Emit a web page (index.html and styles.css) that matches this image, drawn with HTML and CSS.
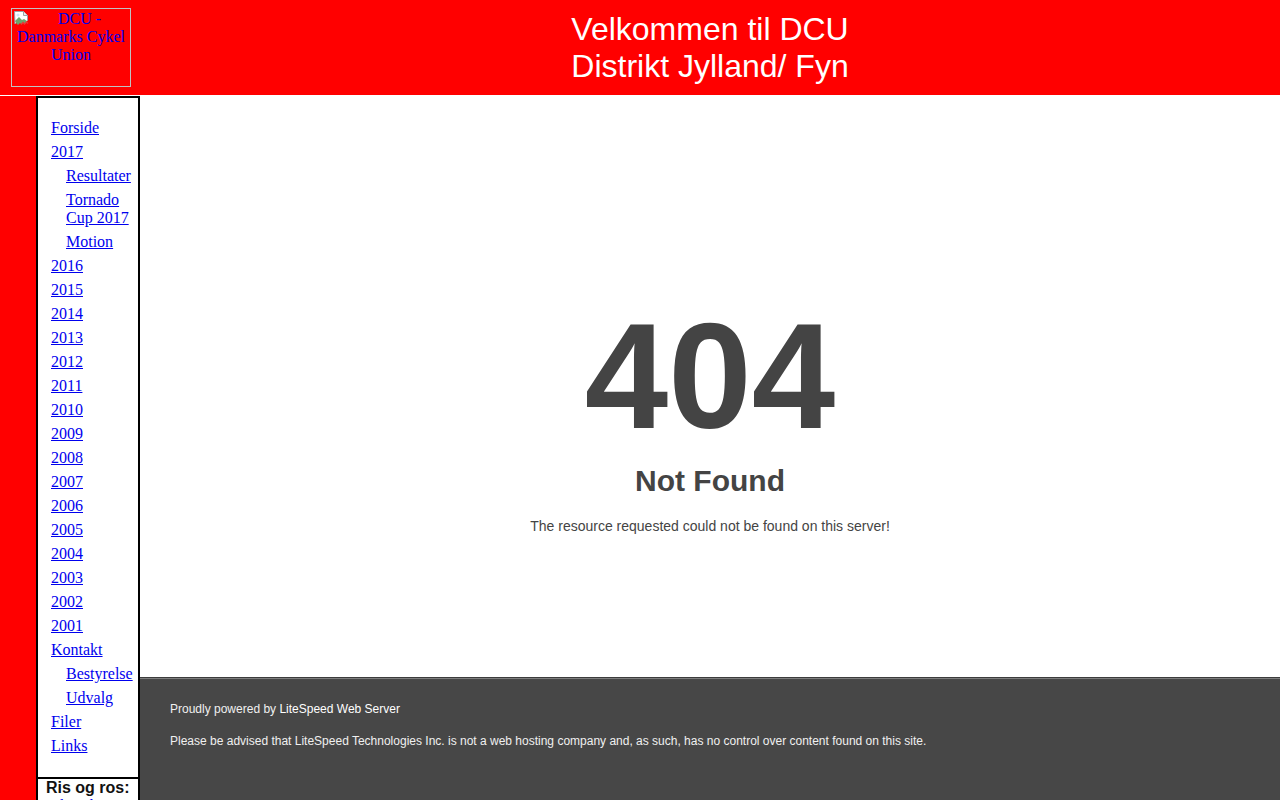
FILE: index.html
```html
<!DOCTYPE html>
<html lang="da">
<head>
<meta charset="utf-8">
<title>DCU Distrikt Jylland/ Fyn</title>
<link rel="stylesheet" href="styles.css">
</head>
<body>
<header class="topbar">
  <div class="logo-cell">
    <a class="logo" href="#">
      <svg class="broken" width="16" height="16" viewBox="0 0 16 16">
        <path d="M1.5 1.5h9l4 4v5l-2 2-1.5-1.5-2 2-1.5-1.5-2 2-1.5-1.5-2 2z" fill="#fff" stroke="#9aa0a6"/>
        <path d="M10.5 1.5v4h4" fill="#e8eaed" stroke="#9aa0a6"/>
        <circle cx="5" cy="5" r="1.6" fill="#d2e3fc"/>
        <path d="M2 11l4-4 3 3 2-1 3 2v1l-2 2-1.5-1.5-2 2-1.5-1.5-2 2-1.5-1.5z" fill="#6ba46b"/>
        <path d="M8 14.5l2-2 1.5 1.5 2-2 1.5 1.5" fill="none" stroke="#e33" stroke-width="1.3"/>
      </svg>DCU - Danmarks Cykel Union</a>
  </div>
  <h1 class="title">Velkommen til DCU<br>Distrikt Jylland/ Fyn</h1>
</header>
<div class="body-row">
  <div class="red-strip"></div>
  <nav class="menu">
    <div class="menu-links">
      <a class="item" href="#">Forside</a>
      <a class="item" href="#">2017</a>
      <a class="item sub" href="#">Resultater</a>
      <a class="item sub" href="#">Tornado Cup 2017</a>
      <a class="item sub" href="#">Motion</a>
      <a class="item" href="#">2016</a>
      <a class="item" href="#">2015</a>
      <a class="item" href="#">2014</a>
      <a class="item" href="#">2013</a>
      <a class="item" href="#">2012</a>
      <a class="item" href="#">2011</a>
      <a class="item" href="#">2010</a>
      <a class="item" href="#">2009</a>
      <a class="item" href="#">2008</a>
      <a class="item" href="#">2007</a>
      <a class="item" href="#">2006</a>
      <a class="item" href="#">2005</a>
      <a class="item" href="#">2004</a>
      <a class="item" href="#">2003</a>
      <a class="item" href="#">2002</a>
      <a class="item" href="#">2001</a>
      <a class="item" href="#">Kontakt</a>
      <a class="item sub" href="#">Bestyrelse</a>
      <a class="item sub" href="#">Udvalg</a>
      <a class="item" href="#">Filer</a>
      <a class="item" href="#">Links</a>
    </div>
    <div class="menu-ris">
      <div class="ris-title">Ris og ros:</div>
      <a class="ris-link" href="#">Skriv her</a>
    </div>
  </nav>
  <main class="frame">
    <div class="error">
      <h2 class="code">404</h2>
      <h3 class="nf">Not Found</h3>
      <p class="msg">The resource requested could not be found on this server!</p>
    </div>
    <footer class="ls-footer">
      <p class="powered">Proudly powered by <a href="#">LiteSpeed Web Server</a></p>
      <p class="advice">Please be advised that LiteSpeed Technologies Inc. is not a web hosting company and, as such, has no control over content found on this site.</p>
    </footer>
  </main>
</div>
</body>
</html>
```
FILE: styles.css
```css
html, body {
  margin: 0;
  padding: 0;
}
body {
  height: 800px;
  overflow: hidden;
  background: #fff;
  font-family: "Liberation Serif", "Times New Roman", serif;
  font-size: 16px;
}
.topbar {
  height: 95px;
  background: #ff0000;
  display: flex;
  align-items: center;
  margin-bottom: 1px;
}
.logo-cell {
  width: 140px;
  flex: none;
  padding-left: 11px;
  box-sizing: border-box;
}
.logo {
  display: block;
  width: 118px;
  height: 76px;
  padding-top: 1px;
  border: 1px solid #c0c0c0;
  color: #0000ee;
  text-decoration: none;
  text-align: center;
  line-height: 18px;
  font-size: 16px;
  overflow: hidden;
}
.broken {
  float: left;
  margin: 0 0 0 1px;
}
.title {
  flex: 1;
  margin: 0;
  text-align: center;
  color: #fff;
  font-family: "Liberation Sans", Arial, sans-serif;
  font-weight: normal;
  font-size: 32px;
  line-height: 37px;
}
.body-row {
  display: flex;
  height: 704px;
}
.red-strip {
  width: 36px;
  flex: none;
  background: #ff0000;
}
.menu {
  width: 104px;
  flex: none;
  box-sizing: border-box;
  border-left: 2px solid #000;
  border-right: 2px solid #000;
  border-top: 2px solid #000;
  background: #fff;
}
.menu-links {
  padding: 21px 0 22px 13px;
  border-bottom: 2px solid #000;
}
.item {
  display: block;
  color: #0000ee;
  line-height: 18px;
  margin-bottom: 6px;
}
.item:last-child {
  margin-bottom: 0;
}
.item.sub {
  margin-left: 15px;
}
.menu-ris {
  padding-left: 8px;
}
.ris-title {
  font-family: "Liberation Sans", Arial, sans-serif;
  font-weight: bold;
  font-size: 16px;
  line-height: 18px;
  color: #111;
}
.ris-link {
  display: block;
  margin-left: 5px;
  color: #0000ee;
  line-height: 18px;
}
.frame {
  flex: 1;
  display: flex;
  flex-direction: column;
  color: #444;
  font: normal 14px/20px "Liberation Sans", Arial, Helvetica, sans-serif;
}
.error {
  flex: 1;
  text-align: center;
  padding-top: 205px;
}
.code {
  margin: 0;
  font-size: 150px;
  line-height: 150px;
  font-weight: bold;
}
.nf {
  margin: 20px 0 25px;
  font-size: 30px;
  line-height: 20px;
  font-weight: bold;
}
.msg {
  margin: 0;
}
.ls-footer {
  flex: none;
  height: 123px;
  padding: 21px 30px 0;
  box-sizing: border-box;
  color: #f0f0f0;
  font-size: 12px;
  line-height: 20px;
  background-color: #474747;
  border-top: 1px solid rgba(0, 0, 0, 0.15);
  box-shadow: 0 1px 0 rgba(255, 255, 255, 0.3) inset;
}
.ls-footer p {
  margin: 0 0 12px;
}
.ls-footer a {
  color: #fff;
  text-decoration: none;
}
```
